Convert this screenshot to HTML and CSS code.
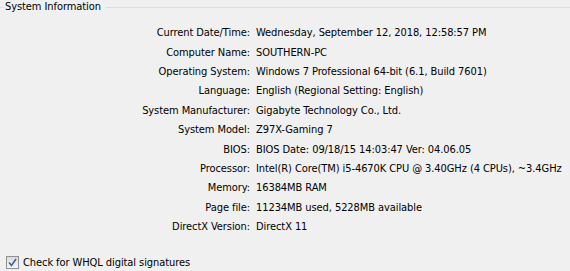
FILE: index.html
```html
<!DOCTYPE html>
<html lang="en">
<head>
  <meta charset="UTF-8" />
  <meta name="viewport" content="width=device-width, initial-scale=1.0"/>
  <title>System Information</title>
  <link rel="stylesheet" href="styles.css">
</head>
<body>

<div class="group">
  <!-- Group box header -->
  <div class="group-title">
    <span class="line-start"></span>
    <span class="title-text">System Information</span>
    <span class="line-end"></span>
  </div>

  <div class="info">
    <div class="label">Current Date/Time:</div>
    <div class="value">Wednesday, September 12, 2018, 12:58:57 PM</div>
    <div class="label">Computer Name:</div>
    <div class="value">SOUTHERN-PC</div>
    <div class="label">Operating System:</div>
    <div class="value">Windows 7 Professional 64-bit (6.1, Build 7601)</div>
    <div class="label">Language:</div>
    <div class="value">English (Regional Setting: English)</div>
    <div class="label">System Manufacturer:</div>
    <div class="value">Gigabyte Technology Co., Ltd.</div>
    <div class="label">System Model:</div>
    <div class="value">Z97X-Gaming 7</div>
    <div class="label">BIOS:</div>
    <div class="value">BIOS Date: 09/18/15 14:03:47 Ver: 04.06.05</div>
    <div class="label">Processor:</div>
    <div class="value">Intel(R) Core(TM) i5-4670K CPU @ 3.40GHz (4 CPUs), ~3.4GHz</div>
    <div class="label">Memory:</div>
    <div class="value">16384MB RAM</div>
    <div class="label">Page file:</div>
    <div class="value">11234MB used, 5228MB available</div>
    <div class="label">DirectX Version:</div>
    <div class="value">DirectX 11</div>
  </div>
</div>

<label class="check">
  <span class="box">
    <svg width="9" height="9" viewBox="0 0 9 9">
      <path d="M1 4.5 L3.5 7.5 L8 1" fill="none" stroke="#3b5fb0" stroke-width="1.6"/>
    </svg>
  </span>
  Check for WHQL digital signatures
</label>

</body>
</html>
```

FILE: styles.css
```css
body {
  font-family: "DejaVu Sans Condensed", "DejaVu Sans", sans-serif;
  font-size: 11px;
  letter-spacing: -0.08px;
  color: #000;
  background: #f0f0f0;
  margin: 0;
  width: 570px;
  height: 271px;
  overflow: hidden;
}

.group-title {
  display: flex;
  align-items: center;
  height: 14px;
}

.line-start {
  width: 4px;
  border-top: 1px solid #d5dfe5;
}

.line-end {
  flex: 1;
  border-top: 1px solid #d5dfe5;
  margin-left: 4px;
}

.title-text {
  padding: 0 1px;
  line-height: 14px;
}

.info {
  display: grid;
  grid-template-columns: 250px 1fr;
  column-gap: 6px;
  grid-auto-rows: 19.4px;
  margin-top: 9px;
  align-items: center;
  white-space: nowrap;
}

.label {
  text-align: right;
}

.check {
  display: flex;
  align-items: center;
  gap: 4px;
  margin-top: 20px;
  margin-left: 6px;
}

.box {
  width: 11px;
  height: 11px;
  border: 1px solid #8e8f8f;
  background: linear-gradient(#dcdcdc, #f6f6f6);
  display: flex;
  align-items: center;
  justify-content: center;
}
```
